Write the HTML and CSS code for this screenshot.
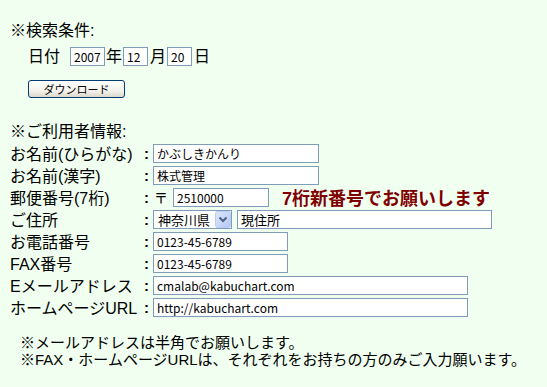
FILE: index.html
```html
<!DOCTYPE html>
<html lang="ja">
  <head>
    <meta charset="UTF-8" />
    <title>検索条件</title>
    <link rel="stylesheet" href="styles.css">
  </head>
  <body>
    <div class="page">
      <p class="title">※検索条件:</p>
      <div class="date-row">
        <span class="date-label">日付</span>
        <input class="box year" type="text" value="2007"><span>年</span><input class="box md" type="text" value="12"><span>月</span><input class="box md" type="text" value="20"><span>日</span>
      </div>
      <button class="dl-btn" type="button">ダウンロード</button>

      <p class="title user-title">※ご利用者情報:</p>
      <div class="form">
        <span class="label">お名前(ひらがな)</span>
        <span class="colon">:</span>
        <div class="field"><input class="box w-name" type="text" value="かぶしきかんり"></div>

        <span class="label">お名前(漢字)</span>
        <span class="colon">:</span>
        <div class="field"><input class="box w-name" type="text" value="株式管理"></div>

        <span class="label">郵便番号(7桁)</span>
        <span class="colon">:</span>
        <div class="field">
          <span class="zip-mark">〒</span>
          <input class="box w-zip" type="text" value="2510000">
          <span class="notice">7桁新番号でお願いします</span>
        </div>

        <span class="label">ご住所</span>
        <span class="colon">:</span>
        <div class="field">
          <div class="select-wrap">
            <select class="pref">
              <option>神奈川県</option>
            </select>
            <span class="select-arrow">
              <svg width="16" height="17" viewBox="0 0 16 17">
                <defs>
                  <linearGradient id="arw" x1="0" y1="0" x2="1" y2="1">
                    <stop offset="0" stop-color="#dce8fd" />
                    <stop offset="1" stop-color="#b4c8f4" />
                  </linearGradient>
                </defs>
                <rect x="0.5" y="0.5" width="15" height="16" rx="2" fill="url(#arw)" stroke="#b8caf5" />
                <path d="M4.5 6.5 L8 10 L11.5 6.5" fill="none" stroke="#4d6185" stroke-width="2" />
              </svg>
            </span>
          </div>
          <input class="box w-addr" type="text" value="現住所">
        </div>

        <span class="label">お電話番号</span>
        <span class="colon">:</span>
        <div class="field"><input class="box w-tel" type="text" value="0123-45-6789"></div>

        <span class="label">FAX番号</span>
        <span class="colon">:</span>
        <div class="field"><input class="box w-tel" type="text" value="0123-45-6789"></div>

        <span class="label">Eメールアドレス</span>
        <span class="colon">:</span>
        <div class="field"><input class="box w-url" type="text" value="cmalab@kabuchart.com"></div>

        <span class="label">ホームページURL</span>
        <span class="colon">:</span>
        <div class="field"><input class="box w-url" type="text" value="http://kabuchart.com"></div>
      </div>

      <div class="notes">
        <p>※メールアドレスは半角でお願いします。</p>
        <p>※FAX・ホームページURLは、それぞれをお持ちの方のみご入力願います。</p>
      </div>
    </div>
  </body>
</html>
```

FILE: styles.css
```css
body {
  margin: 0;
  padding: 0;
  background-color: #f0fff0;
  color: #000;
  font-family: "Liberation Sans", "Noto Sans CJK JP", sans-serif;
  font-size: 16px;
}

.page {
  padding: 21px 0 0 10px;
}

.title {
  margin: 0;
  line-height: 20px;
}

.user-title {
  margin-top: 24px;
}

/* date inputs */
.date-row {
  display: flex;
  align-items: center;
  height: 19px;
  margin: 6px 0 0 18px;
  line-height: 19px;
}

.date-label {
  margin-right: 10px;
}

.box {
  box-sizing: border-box;
  height: 19px;
  margin: 0;
  padding: 0 3px;
  border: 1px solid #7f9db9;
  background-color: #fff;
  color: #000;
  font-family: "Noto Sans CJK JP", "DejaVu Sans", sans-serif;
  font-size: 12px;
  outline: none;
}

.year {
  width: 35px;
  margin-right: 1px;
}

.md {
  width: 25px;
  margin: 0 2px 0 1px;
}

.dl-btn {
  display: block;
  box-sizing: border-box;
  width: 97px;
  height: 18px;
  margin: 14px 0 0 18px;
  padding: 0;
  border: 1px solid #003c74;
  border-radius: 3px;
  background: linear-gradient(#ffffff, #f3f2ec 60%, #dcd8cc);
  color: #000;
  font-family: "Noto Sans CJK JP", sans-serif;
  font-size: 11px;
  line-height: 16px;
  cursor: pointer;
}

/* user info form */
.form {
  display: grid;
  grid-template-columns: 134px 9px auto;
  grid-auto-rows: 22px;
  align-items: center;
}

.label {
  white-space: nowrap;
}

.colon {
  font-weight: bold;
  font-size: 15px;
}

.field {
  display: flex;
  align-items: center;
}

.w-name {
  width: 166px;
}

.zip-mark {
  font-size: 14px;
  margin: 0 5px 0 1px;
}

.w-zip {
  width: 96px;
}

.notice {
  margin-left: 13px;
  color: #800000;
  font-weight: bold;
  font-size: 18px;
  white-space: nowrap;
}

.select-wrap {
  position: relative;
  width: 79px;
  height: 19px;
  margin-right: 5px;
}

.pref {
  box-sizing: border-box;
  width: 79px;
  height: 19px;
  margin: 0;
  padding: 0 0 0 4px;
  border: 1px solid #7f9db9;
  background-color: #fff;
  color: #000;
  font-family: "Noto Sans CJK JP", sans-serif;
  font-size: 13px;
  line-height: 17px;
  -webkit-appearance: none;
  appearance: none;
  outline: none;
}

.select-arrow {
  position: absolute;
  top: 1px;
  right: 1px;
  width: 16px;
  height: 17px;
  pointer-events: none;
}

.select-arrow svg {
  display: block;
}

.w-addr {
  width: 255px;
  font-size: 13px;
}

.w-tel {
  width: 135px;
}

.w-url {
  width: 315px;
}

/* notes */
.notes {
  margin: 16px 0 0 10px;
  font-size: 15px;
  line-height: 17px;
}

.notes p {
  margin: 0;
}
```
